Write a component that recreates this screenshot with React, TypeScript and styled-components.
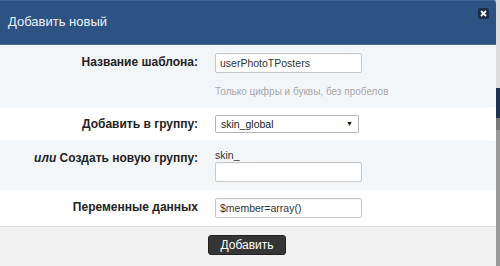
import React from "react";
import styled, { createGlobalStyle } from "styled-components";

const Global = createGlobalStyle`
  html, body { margin: 0; padding: 0; }
  body {
    width: 500px;
    height: 266px;
    overflow: hidden;
    font-family: "Liberation Sans", Arial, sans-serif;
    background: #9c9c9c;
  }
`;

const Page = styled.div`
  display: flex;
  width: 500px;
  height: 266px;
`;

const Dialog = styled.div`
  width: 496px;
  height: 266px;
  display: flex;
  flex-direction: column;
  background: #fff;
  border-top-right-radius: 4px;
  overflow: hidden;
  flex-shrink: 0;
`;

const Backdrop = styled.div`
  flex: 1;
  display: flex;
  flex-direction: column;
  background: #9a9a9a;
`;

const BackdropBlock = styled.div<{ $h: number; $c: string }>`
  height: ${(p) => p.$h}px;
  background: ${(p) => p.$c};
  flex-shrink: 0;
`;

const Header = styled.div`
  display: flex;
  align-items: center;
  justify-content: space-between;
  padding: 0 7px 0 8px;
  background: #2c5384;
  border-bottom: 1px solid #4a6f9c;
  border-top: 1px solid #3d6596;
  box-sizing: border-box;
  height: 45px;
`;

const Title = styled.h1`
  margin: 0;
  font-size: 13px;
  font-weight: normal;
  color: #eef2f7;
  padding-bottom: 2px;
`;

const Close = styled.button`
  align-self: flex-start;
  margin-top: 7px;
  width: 11px;
  height: 11px;
  padding: 0;
  border: none;
  border-radius: 2px;
  background: #1b2e48;
  display: flex;
  align-items: center;
  justify-content: center;
`;

const Row = styled.div<{ $alt?: boolean }>`
  display: grid;
  grid-template-columns: 198px 147px;
  column-gap: 17px;
  padding: 8px 0;
  background: ${(p) => (p.$alt ? "#f3f6f9" : "#ffffff")};
`;

const Label = styled.div`
  text-align: right;
  font-size: 12px;
  font-weight: bold;
  color: #222;
  line-height: 16px;
  padding-top: 1px;
  em { font-style: italic; }
`;

const Field = styled.div`
  display: flex;
  flex-direction: column;
`;

const Input = styled.div`
  height: 20px;
  box-sizing: border-box;
  border: 1px solid #c8c8c8;
  border-radius: 2px;
  box-shadow: inset 0 1px 1px rgba(0, 0, 0, 0.05);
  background: #fff;
  font-size: 10.5px;
  line-height: 18px;
  padding: 0 4px;
  color: #333;
  white-space: nowrap;
`;

const Select = styled.div`
  width: 144px;
  height: 18px;
  box-sizing: border-box;
  border: 1px solid #b5b5b5;
  border-radius: 2px;
  background: #fff;
  font-size: 10.5px;
  line-height: 16px;
  padding: 0 5px;
  color: #222;
  display: flex;
  justify-content: space-between;
  align-items: center;
`;

const Arrow = styled.span`
  font-size: 7px;
  color: #111;
`;

const Hint = styled.div`
  margin-top: 12px;
  font-size: 10px;
  line-height: 14px;
  color: #a8a8a8;
  white-space: nowrap;
`;

const Prefix = styled.div`
  font-size: 10.5px;
  line-height: 13px;
  color: #333;
`;

const Footer = styled.div`
  flex: 1;
  border-top: 1px solid #d9d9d9;
  background: #f1f1f1;
  display: flex;
  justify-content: flex-start;
  padding: 8px 0 0 208px;
`;

const Button = styled.button`
  width: 78px;
  height: 20px;
  border: 1px solid #222;
  border-radius: 3px;
  background: #353535;
  color: #fff;
  font-family: "Liberation Sans", Arial, sans-serif;
  font-size: 12px;
  padding: 0;
`;

export default function App() {
  return (
    <>
      <Global />
      <Page>
        <Dialog>
          <Header>
            <Title>Добавить новый</Title>
            <Close aria-label="close">
              <svg width="7" height="7" viewBox="0 0 7 7">
                <path d="M1 1L6 6M6 1L1 6" stroke="#fff" strokeWidth="1.8" />
              </svg>
            </Close>
          </Header>
          <Row $alt>
            <Label>Название шаблона:</Label>
            <Field>
              <Input>userPhotoTPosters</Input>
              <Hint>Только цифры и буквы, без пробелов</Hint>
            </Field>
          </Row>
          <Row>
            <Label>Добавить в группу:</Label>
            <Field>
              <Select>
                skin_global<Arrow>▼</Arrow>
              </Select>
            </Field>
          </Row>
          <Row $alt>
            <Label>
              <em>или</em> Создать новую группу:
            </Label>
            <Field>
              <Prefix>skin_</Prefix>
              <Input />
            </Field>
          </Row>
          <Row>
            <Label>Переменные данных</Label>
            <Field>
              <Input>$member=array()</Input>
            </Field>
          </Row>
          <Footer>
            <Button>Добавить</Button>
          </Footer>
        </Dialog>
        <Backdrop>
          <BackdropBlock $h={88} $c="#dcdcdc" />
          <BackdropBlock $h={30} $c="#1f3451" />
          <BackdropBlock $h={12} $c="#7a7a7a" />
        </Backdrop>
      </Page>
    </>
  );
}
